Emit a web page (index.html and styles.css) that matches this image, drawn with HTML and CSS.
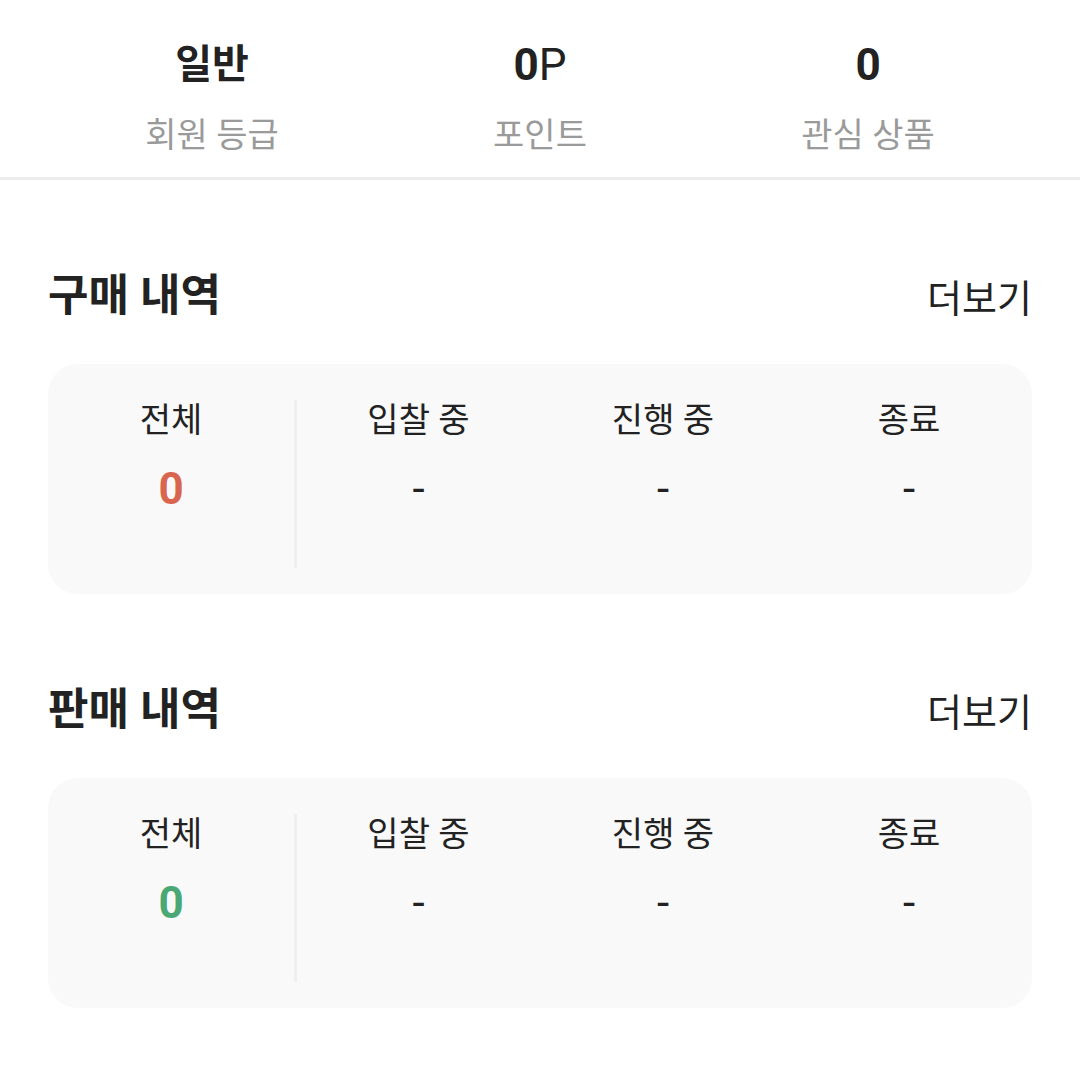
FILE: index.html
```html
<!DOCTYPE html>
<html lang="ko">
<head>
  <meta charset="UTF-8">
  <meta name="viewport" content="width=device-width, initial-scale=1.0">
  <title>마이페이지</title>
  <link rel="stylesheet" href="styles.css">
</head>
<body>
  <div class="summary">
    <div class="summary-item">
      <div class="summary-value">일반</div>
      <div class="summary-label">회원 등급</div>
    </div>
    <div class="summary-item">
      <div class="summary-value num">0<span class="unit">P</span></div>
      <div class="summary-label">포인트</div>
    </div>
    <div class="summary-item">
      <div class="summary-value num">0</div>
      <div class="summary-label">관심 상품</div>
    </div>
  </div>

  <div class="section">
    <div class="section-header">
      <h2>구매 내역</h2>
      <a class="more">더보기</a>
    </div>
    <div class="card">
      <div class="stat">
        <div class="stat-label">전체</div>
        <div class="stat-value buy">0</div>
      </div>
      <div class="stat divided">
        <div class="stat-label">입찰 중</div>
        <div class="stat-value">-</div>
      </div>
      <div class="stat">
        <div class="stat-label">진행 중</div>
        <div class="stat-value">-</div>
      </div>
      <div class="stat">
        <div class="stat-label">종료</div>
        <div class="stat-value">-</div>
      </div>
    </div>
  </div>

  <div class="section">
    <div class="section-header">
      <h2>판매 내역</h2>
      <a class="more">더보기</a>
    </div>
    <div class="card">
      <div class="stat">
        <div class="stat-label">전체</div>
        <div class="stat-value sell">0</div>
      </div>
      <div class="stat divided">
        <div class="stat-label">입찰 중</div>
        <div class="stat-value">-</div>
      </div>
      <div class="stat">
        <div class="stat-label">진행 중</div>
        <div class="stat-value">-</div>
      </div>
      <div class="stat">
        <div class="stat-label">종료</div>
        <div class="stat-value">-</div>
      </div>
    </div>
  </div>
</body>
</html>
```

FILE: styles.css
```css
body {
  margin: 0;
  background-color: #fff;
  color: #222;
  font-family: Roboto, "Noto Sans CJK KR", sans-serif;
}

.summary {
  display: grid;
  grid-template-columns: repeat(3, 1fr);
  padding: 41px 48px 20px;
  border-bottom: 3px solid #ececec;
}

.summary-item {
  display: flex;
  flex-direction: column;
  align-items: center;
  gap: 24px;
}

.summary-value {
  font-size: 40px;
  line-height: 48px;
  font-weight: 700;
}

.summary-value.num {
  font-size: 44px;
}

.summary-value .unit {
  font-weight: 400;
}

.summary-label {
  font-size: 34px;
  line-height: 44px;
  color: #9a9a9a;
}

.section {
  margin-top: 88px;
  padding: 0 48px;
}

.section-header {
  display: flex;
  justify-content: space-between;
  align-items: center;
  height: 56px;
  margin-bottom: 40px;
}

.section-header h2 {
  margin: 0;
  font-size: 44px;
  line-height: 56px;
  font-weight: 700;
}

.more {
  font-size: 38px;
  line-height: 48px;
  margin-top: 6px;
  color: #222;
}

.card {
  display: grid;
  grid-template-columns: repeat(4, 1fr);
  padding: 36px 0 26px;
  background-color: #f9f9f9;
  border-radius: 30px;
}

.stat {
  display: flex;
  flex-direction: column;
  align-items: center;
  min-height: 168px;
  gap: 23px;
}

.stat.divided {
  border-left: 3px solid #efefef;
}

.stat-label {
  font-size: 34px;
  line-height: 40px;
}

.stat-value {
  font-size: 44px;
  line-height: 52px;
  font-weight: 400;
}

.stat-value.buy {
  font-weight: 700;
  color: #d9654f;
}

.stat-value.sell {
  font-weight: 700;
  color: #4aa874;
}
```
